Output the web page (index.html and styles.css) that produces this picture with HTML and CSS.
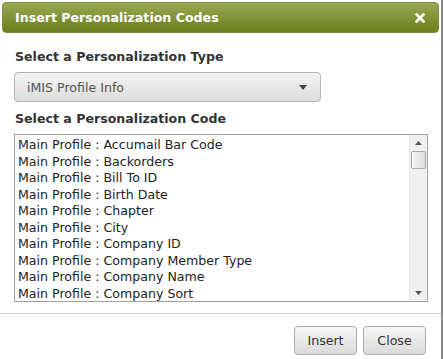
FILE: index.html
```html
<!DOCTYPE html>
<html>
<head>
  <title>Insert Personalization Codes</title>
  <link rel="stylesheet" href="styles.css">
</head>
<body>
  <div class="dialog">
    <div class="title-bar">
      <span class="title">Insert Personalization Codes</span>
      <svg class="close-icon" width="10" height="10" viewBox="0 0 10 10">
        <path d="M1.5 1.5 L8.5 8.5 M8.5 1.5 L1.5 8.5" stroke="#fff" stroke-width="2.6" stroke-linecap="square"/>
      </svg>
    </div>

    <div class="dialog-body">
      <div class="field-label">Select a Personalization Type</div>
      <div class="dropdown">
        <span>iMIS Profile Info</span>
        <svg width="8" height="5" viewBox="0 0 8 5"><path d="M0 0 H8 L4 5 Z" fill="#444"/></svg>
      </div>

      <div class="field-label">Select a Personalization Code</div>
      <div class="listbox">
        <div class="list-items">
          <div class="list-item">Main Profile : Accumail Bar Code</div>
          <div class="list-item">Main Profile : Backorders</div>
          <div class="list-item">Main Profile : Bill To ID</div>
          <div class="list-item">Main Profile : Birth Date</div>
          <div class="list-item">Main Profile : Chapter</div>
          <div class="list-item">Main Profile : City</div>
          <div class="list-item">Main Profile : Company ID</div>
          <div class="list-item">Main Profile : Company Member Type</div>
          <div class="list-item">Main Profile : Company Name</div>
          <div class="list-item">Main Profile : Company Sort</div>
        </div>
        <div class="scrollbar">
          <svg class="scroll-arrow" width="7" height="4" viewBox="0 0 7 4"><path d="M0 4 H7 L3.5 0 Z" fill="#555"/></svg>
          <div class="scroll-thumb"></div>
          <div class="scroll-track"></div>
          <svg class="scroll-arrow" width="7" height="4" viewBox="0 0 7 4"><path d="M0 0 H7 L3.5 4 Z" fill="#555"/></svg>
        </div>
      </div>
    </div>

    <div class="button-bar">
      <button class="btn">Insert</button>
      <button class="btn">Close</button>
    </div>
  </div>
</body>
</html>
```

FILE: styles.css
```css
body {
  margin: 0;
  background: #fff;
  font-family: "DejaVu Sans", Verdana, sans-serif;
  font-size: 12.6px;
  color: #222;
}

.dialog {
  width: 441px;
  height: 359px;
  border-right: 2px solid #8a8a8a;
  display: flex;
  flex-direction: column;
}

.title-bar {
  margin: 2px 2px 0 2px;
  height: 29px;
  border: 1px solid #7d8c3e;
  border-radius: 4px;
  background: linear-gradient(#97a852, #6c7d1d);
  display: flex;
  align-items: center;
  justify-content: space-between;
  padding: 0 13px 0 12px;
}

.title {
  color: #fff;
  font-weight: bold;
  font-size: 12.6px;
}

.close-icon {
  display: block;
}

.dialog-body {
  padding: 16px 12px 0 14px;
  display: flex;
  flex-direction: column;
}

.field-label {
  font-weight: bold;
  font-size: 12.6px;
  color: #333;
  margin: 0 0 8px 1px;
}

.dropdown {
  width: 280px;
  height: 28px;
  border: 1px solid #b4b4b4;
  border-radius: 4px;
  background: linear-gradient(#f4f4f4, #dcdcdc);
  display: flex;
  align-items: center;
  justify-content: space-between;
  padding: 0 13px 0 12px;
  margin-bottom: 9px;
  color: #555;
}

.listbox {
  width: 412px;
  height: 166px;
  border: 1px solid #a0a0a0;
  display: flex;
  overflow: hidden;
}

.list-items {
  flex: 1;
  padding: 2px 3px;
}

.list-item {
  height: 16.5px;
  line-height: 16px;
  color: #222;
  white-space: nowrap;
}

.scrollbar {
  width: 17px;
  background: #f0f0f0;
  border-left: 1px solid #e6e6e6;
  display: flex;
  flex-direction: column;
  align-items: center;
}

.scroll-arrow {
  display: block;
  margin: 6px 0;
}

.scroll-thumb {
  width: 15px;
  height: 18px;
  border: 1px solid #a9a9a9;
  border-radius: 2px;
  background: linear-gradient(90deg, #f6f6f6, #dedede);
  box-sizing: border-box;
}

.scroll-track {
  flex: 1;
}

.button-bar {
  margin-top: 11px;
  border-top: 1px solid #cfcfcf;
  display: flex;
  justify-content: flex-end;
  gap: 6px;
  padding: 12px 15px 0 0;
}

.btn {
  width: 63px;
  height: 29px;
  border: 1px solid #adadad;
  border-radius: 4px;
  background: linear-gradient(#f6f6f6, #dadada);
  font-family: inherit;
  font-size: 12.6px;
  color: #333;
  padding: 0;
}
```
